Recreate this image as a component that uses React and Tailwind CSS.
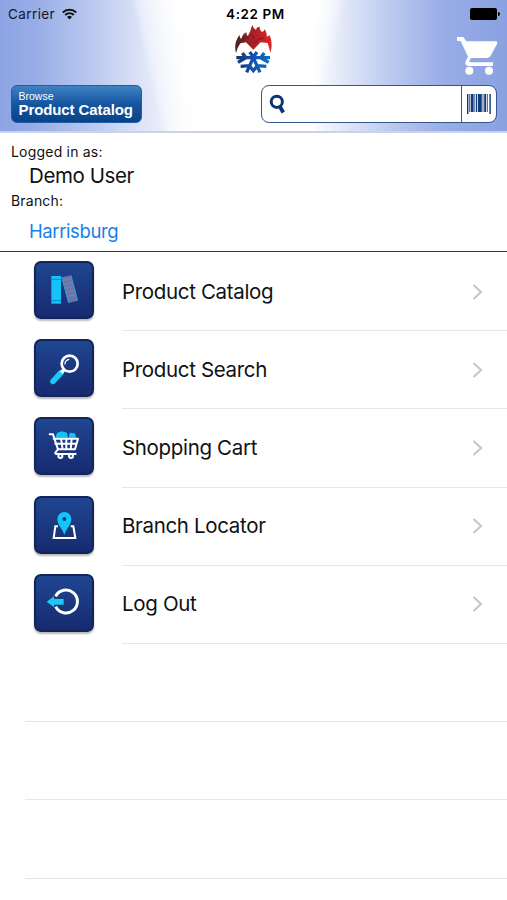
import React from "react";

const BookIcon = () => (
  <>
    <rect x="52" y="45" width="29" height="83" fill="#12c4f8" />
    <path d="M52 55h29M52 119h29" stroke="#0a86c8" strokeWidth="3" />
    <path d="M83 49L111 43L131 119L104 126Z" fill="#6676ad" />
    <path d="M83 49L104 126M111 43L131 119" stroke="#2f9fd2" strokeWidth="3" />
    <path
      d="M87 58l26-6M90 70l26-6M93 82l26-6M97 94l25-6M100 106l25-6"
      stroke="#8d86b0"
      strokeWidth="2"
    />
  </>
);

const SearchIcon = () => (
  <>
    <path d="M80 102L57 127" stroke="#1cc8f6" strokeWidth="17" strokeLinecap="round" />
    <path d="M91 91L82 101" stroke="#fff" strokeWidth="11" />
    <circle cx="107" cy="74" r="24" fill="none" stroke="#fff" strokeWidth="8" />
    <path d="M93 76a14 14 0 0 1 13-15" fill="none" stroke="#fff" strokeWidth="4" />
  </>
);

const CartIcon = () => (
  <>
    <path d="M64 62L69 48L83 43L99 47L102 62ZM104 62L107 47L123 49L126 62Z" fill="#12c4f8" />
    <path
      d="M47 52H57L72 97L64 107Q63 111 70 111H125M59 65H132L123 97H72M64 80H128M81 65L86 97M97 65V97M113 65L110 97"
      fill="none"
      stroke="#fff"
      strokeWidth="6"
      strokeLinejoin="round"
      strokeLinecap="round"
    />
    <circle cx="79" cy="117" r="6" fill="#19429a" stroke="#fff" strokeWidth="6" />
    <circle cx="111" cy="117" r="6" fill="#19429a" stroke="#fff" strokeWidth="6" />
  </>
);

const PinIcon = () => (
  <>
    <path d="M72 91H64L59 126H124L118 91H110" fill="none" stroke="#fff" strokeWidth="6" />
    <path d="M91 118C88 101 70 88 70 69A21 21 0 0 1 112 69C112 88 94 101 91 118Z" fill="#12c4f8" />
    <circle cx="91" cy="69" r="6" fill="#173a86" />
  </>
);

const LogoutIcon = () => (
  <>
    <path d="M65 67A34.5 34.5 0 1 1 65 98" fill="none" stroke="#fff" strokeWidth="9" />
    <path d="M38 83L60 67V75H89V92H60V100Z" fill="#1cc8f6" />
  </>
);

const menuItems = [
  { label: "Product Catalog", Icon: BookIcon },
  { label: "Product Search", Icon: SearchIcon },
  { label: "Shopping Cart", Icon: CartIcon },
  { label: "Branch Locator", Icon: PinIcon },
  { label: "Log Out", Icon: LogoutIcon },
];

const Logo = () => (
  <svg width="40" height="52" viewBox="0 0 120 156">
    <defs>
      <linearGradient id="flame" x1="0" x2="1">
        <stop offset="0" stopColor="#43201f" />
        <stop offset="0.4" stopColor="#a01f24" />
        <stop offset="1" stopColor="#e0242a" />
      </linearGradient>
      <linearGradient id="frost" gradientUnits="userSpaceOnUse" x1="8" x2="107" y1="0" y2="0">
        <stop offset="0" stopColor="#17336f" />
        <stop offset="0.5" stopColor="#1552b4" />
        <stop offset="1" stopColor="#0a6fb4" />
      </linearGradient>
    </defs>
    <path
      d="M6 88C1 68 4 48 17 32Q16 42 22 44Q27 28 38 25Q36 34 42 35Q50 22 55 2Q58 14 66 17Q68 8 77 8Q75 18 84 24Q91 22 92 16Q100 27 98 37Q104 38 107 33Q118 60 109 86Q106 73 101 57L80 55L58 77L36 55L19 58Q9 72 6 88Z"
      fill="url(#flame)"
    />
    <path
      d="M25 46Q35 36 45 45M62 58Q72 42 88 43M50 30Q62 38 60 47"
      fill="none"
      stroke="#711820"
      strokeWidth="3"
    />
    <path
      d="M7 101L108 101M25 87L36 101L12 115M91 87L80 101L104 115M58 101L38 145M58 101L78 145M47 84L58 99L69 84M20 127L46 125M97 127L70 125M46 125L58 140L70 125"
      fill="none"
      stroke="url(#frost)"
      strokeWidth="10"
    />
  </svg>
);

const StatusBar = () => (
  <div className="grid h-[27px] grid-cols-3 items-center pl-2 pr-[7px] pt-px text-[13.5px] text-[#16181d]">
    <div className="flex items-center gap-[7px]">
      <span className="tracking-[0.4px]">Carrier</span>
      <svg width="15" height="12" viewBox="0 0 15 12" fill="none" stroke="#111" strokeWidth="2">
        <path d="M0.8 4.4A9.8 9.8 0 0 1 14.2 4.4" />
        <path d="M3.2 7A6.4 6.4 0 0 1 11.8 7" />
        <path d="M7.5 11.4L5 8.9A3.6 3.6 0 0 1 10 8.9Z" fill="#111" stroke="none" />
      </svg>
    </div>
    <span className="pl-[3px] text-center font-semibold tracking-[0.6px] text-black">4:22 PM</span>
    <div className="flex items-center justify-end gap-px">
      <div className="h-3 w-[27px] rounded-[2px] bg-black" />
      <div className="h-1 w-[2px] rounded-r-full bg-black" />
    </div>
  </div>
);

const Header = () => (
  <header className="flex h-[133px] flex-col border-b-2 border-[#ccd3e6] bg-[linear-gradient(77deg,transparent_157px,rgba(255,255,255,0.35)_164px,#fff_205px,#fff_262px,transparent_262px),linear-gradient(105deg,transparent_262px,#fff_262px,#fff_305px,rgba(255,255,255,0.35)_327px,transparent_335px),linear-gradient(90deg,#8ca4e4_0px,#98ade7_35px,#a9bceb_65px,#bccaf0_95px,#dbe3f7_140px,#fff_195px,#fff_310px,#e4eaf9_340px,#bccaef_390px,#98ace6_445px,#8aa1e1_507px)]">
    <StatusBar />
    <div className="grid h-[53px] grid-cols-3 pr-[9px]">
      <div />
      <div className="-mt-[3px] flex justify-center pl-[10px]">
        <Logo />
      </div>
      <div className="flex justify-end pt-[9px]">
        <svg width="42" height="39" viewBox="0 0 126 117" fill="#fff">
          <path d="M3 3H22L31 16H121Q126 18 123 24L103 61Q100 66 93 66H45L40 75Q39 79 44 79H111V90H35Q25 87 29 76L36 62L14 15H3Z" />
          <circle cx="40" cy="104" r="12" />
          <circle cx="99" cy="104" r="12" />
        </svg>
      </div>
    </div>
    <div className="flex items-start justify-between pl-[11px] pr-[10px] pt-[5px]">
      <button className="flex h-[38px] w-[131px] flex-col items-start rounded-[6px] border border-[#1f5ea6] bg-linear-to-b from-[#3e83c4] via-[#15569f] to-[#084387] pl-[6.5px] pt-[5px] text-left font-['Liberation_Sans',Arial,sans-serif] text-white">
        <span className="text-[10.5px] leading-[11px]">Browse</span>
        <span className="whitespace-nowrap text-[15px] font-bold leading-[15px] tracking-[-0.1px]">
          Product Catalog
        </span>
      </button>
      <div className="flex h-[38px] w-[236px] rounded-[8px] border-[1.5px] border-[#34558d] bg-white">
        <div className="flex flex-1 items-center pl-[7px]">
          <svg width="17" height="20" viewBox="0 0 17 20" fill="none" stroke="#0c3373">
            <circle cx="7.8" cy="7.8" r="5.6" strokeWidth="3" />
            <path d="M10.5 12L14.3 18.5" strokeWidth="3.8" />
          </svg>
        </div>
        <div className="flex w-[35px] items-center justify-center border-l-[1.5px] border-[#34558d]">
          <svg width="24" height="20" viewBox="0 0 24 20" fill="#123a78">
            <path d="M0 0h1.4v20H0zM2.3 0h1v18h-1zM4 0h2.6v18H4zM7.4 0h.8v18h-.8zM9 0h1v18H9zM10.8 0h4v18h-4zM15.6 0h.8v18h-.8zM17.2 0h1.8v18h-1.8zM19.8 0h.9v18h-.9zM22.4 0h1.4v20h-1.4z" />
          </svg>
        </div>
      </div>
    </div>
  </header>
);

const App = () => {
  return (
    <div className="h-[900px] w-[507px] overflow-hidden bg-white font-[Inter,sans-serif] text-[#111]">
      <Header />

      {/* Account */}
      <section className="h-[119px] border-b border-[#3a3a3c] pl-[11px] pt-[9px]">
        <p className="text-[14px] leading-5 tracking-[0.2px]">Logged in as:</p>
        <p className="pl-[18px] text-[20.5px] leading-[27px] tracking-[-0.4px]">Demo User</p>
        <p className="text-[14px] leading-6 tracking-[0.2px]">Branch:</p>
        <p className="pl-[18px] pt-[6px] text-[18.5px] leading-6 tracking-[-0.4px] text-[#1680ee]">
          Harrisburg
        </p>
      </section>

      {/* Menu */}
      <ul>
        {menuItems.map(({ label, Icon }) => (
          <li key={label} className="flex h-[78.2px] pl-[34px]">
            <div className="mt-[9px] h-[58px] w-[60px] rounded-[7px] border-2 border-[#122559] bg-linear-to-b from-[#1f4690] to-[#172a70] shadow-[0_2px_2px_rgba(0,0,0,0.28)]">
              <svg className="-ml-[2px] -mt-[2px]" width="60" height="58" viewBox="0 0 180 174">
                <Icon />
              </svg>
            </div>
            <div className="relative top-px ml-7 flex flex-1 items-center justify-between border-b border-[#e6e6e8] pr-6">
              <span className="pt-px text-[20.5px] tracking-[-0.33px]">{label}</span>
              <svg width="11" height="18" viewBox="0 0 11 18" fill="none" stroke="#c7c7cc" strokeWidth="2.2">
                <path d="M1.5 2L9 9L1.5 16" />
              </svg>
            </div>
          </li>
        ))}
        {[1, 2, 3].map((n) => (
          <li key={n} className="relative top-px ml-[25px] h-[78.2px] border-b border-[#e6e6e8]" />
        ))}
      </ul>
    </div>
  );
};

export default App;
